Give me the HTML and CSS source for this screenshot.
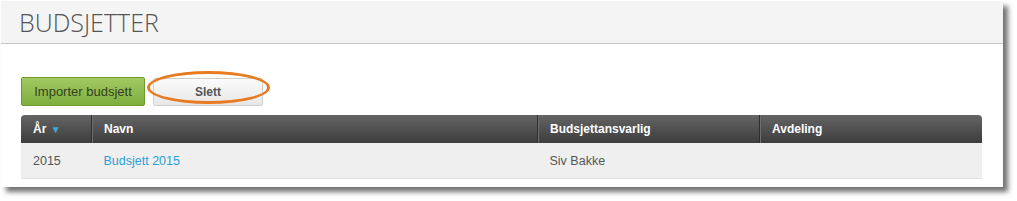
FILE: index.html
```html
<!DOCTYPE html>
<html>
<head>
<meta charset="utf-8">
<link rel="stylesheet" href="styles.css">
</head>
<body>
<div class="frame">
  <div class="page-head">
    <h1 class="title">BUDSJETTER</h1>
  </div>
  <div class="content">
    <div class="toolbar">
      <button class="btn btn-green">Importer budsjett</button>
      <span class="btn-wrap">
        <button class="btn btn-grey">Slett</button>
        <span class="highlight"></span>
      </span>
    </div>
    <table class="grid">
      <thead>
        <tr>
          <th class="c1">År <span class="sort">▼</span></th>
          <th class="c2">Navn</th>
          <th class="c3">Budsjettansvarlig</th>
          <th class="c4">Avdeling</th>
        </tr>
      </thead>
      <tbody>
        <tr>
          <td>2015</td>
          <td><a class="link" href="#">Budsjett 2015</a></td>
          <td>Siv Bakke</td>
          <td></td>
        </tr>
      </tbody>
    </table>
  </div>
</div>
</body>
</html>
```

FILE: styles.css
```css
html, body {
  margin: 0;
  padding: 0;
  background: #ffffff;
}
body {
  width: 1017px;
  height: 201px;
  overflow: hidden;
  font-family: "Liberation Sans", Arial, sans-serif;
}
.frame {
  margin: 1px 0 0 1px;
  width: 1002px;
  height: 186px;
  background: #ffffff;
  box-shadow: 5px 5px 5px rgba(0, 0, 0, 0.55);
}
.page-head {
  height: 42px;
  margin-top: 1px;
  background: #f4f4f4;
  border-bottom: 1px solid #c6c6c6;
  display: flex;
  align-items: center;
  padding-left: 18px;
}
.title {
  margin: 0;
  font-family: "Open Sans", sans-serif;
  font-weight: 300;
  font-size: 25px;
  color: #555555;
  letter-spacing: 0;
}
.content {
  padding: 33px 0 0 20px;
}
.toolbar {
  display: flex;
  gap: 8px;
  align-items: flex-start;
}
.btn {
  font-family: "Liberation Sans", Arial, sans-serif;
  font-size: 13px;
  border-radius: 2px;
  padding: 0;
  margin: 0;
}
.btn-green {
  width: 124px;
  height: 29px;
  background: linear-gradient(#a2c963, #7fae3d);
  border: 1px solid #6d9a31;
  color: #34421f;
}
.btn-wrap {
  position: relative;
  display: inline-block;
  margin-top: 1px;
}
.btn-grey {
  width: 110px;
  height: 28px;
  font-size: 12px;
  background: linear-gradient(#fbfbfb, #e7e7e7);
  border: 1px solid #cfcfcf;
  color: #555555;
  font-weight: bold;
}
.highlight {
  position: absolute;
  left: -6px;
  top: -7px;
  width: 117px;
  height: 27px;
  border: 3px solid #e87a22;
  border-radius: 50%;
}
.grid {
  margin-top: 9px;
  width: 960px;
  border-collapse: collapse;
  table-layout: fixed;
  font-size: 12px;
}
.grid th {
  height: 28px;
  padding: 0 0 0 12px;
  text-align: left;
  color: #ffffff;
  font-weight: bold;
  background: linear-gradient(#646464, #3d3d3d);
  border-left: 1px solid #2e2e2e;
  box-shadow: inset 1px 0 0 #6e6e6e;
}
.grid th.c1 {
  border-left: none;
  box-shadow: none;
  border-top-left-radius: 4px;
}
.grid th.c4 {
  border-top-right-radius: 4px;
}
.c1 { width: 58px; }
.c2 { width: 433px; }
.c3 { width: 209px; }
.c4 { width: 210px; }
.sort {
  color: #3fa7dc;
  font-size: 10px;
  margin-left: 1px;
}
.grid td {
  height: 35px;
  padding: 0 0 0 12px;
  background: #efefef;
  color: #555555;
  font-size: 12.5px;
  border-bottom: 1px solid #e2e2e2;
}
.link {
  color: #2a9fd8;
  text-decoration: none;
}
```
